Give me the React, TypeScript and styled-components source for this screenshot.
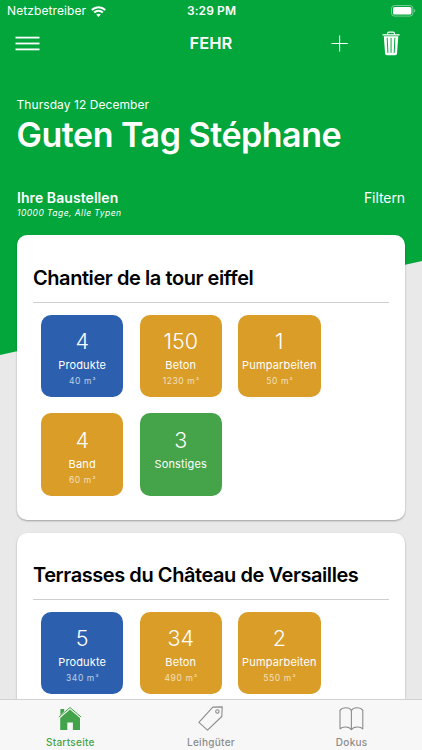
import React from "react";
import styled, { createGlobalStyle } from "styled-components";

const GlobalStyle = createGlobalStyle`
  * { box-sizing: border-box; }
  body {
    margin: 0;
    font-family: Inter, "Liberation Sans", sans-serif;
    -webkit-font-smoothing: antialiased;
  }
`;

const Screen = styled.div`
  position: relative;
  display: flex;
  flex-direction: column;
  width: 422px;
  height: 750px;
  overflow: hidden;
  color: #fff;
  background: #e9e9e9;
  white-space: nowrap;
  isolation: isolate;

  &::before {
    content: "";
    position: absolute;
    inset: 0;
    z-index: -1;
    background: #02a63b;
    clip-path: polygon(0 0, 100% 0, 100% 261px, 0 355px);
  }
`;

const StatusBar = styled.div`
  display: grid;
  grid-template-columns: 1fr auto 1fr;
  align-items: center;
  flex: none;
  height: 22px;
  padding: 0 6px 0 7px;
`;

const Carrier = styled.div`
  display: flex;
  align-items: center;
  gap: 5px;
  font-size: 12px;
  line-height: 22px;
  letter-spacing: 0.1px;
`;

const Clock = styled.div`
  font-size: 12px;
  line-height: 22px;
  font-weight: 600;
  letter-spacing: 0.1px;
`;

const Battery = styled.svg`
  justify-self: end;
  display: block;
`;

const NavBar = styled.nav`
  display: grid;
  grid-template-columns: 1fr auto 1fr;
  align-items: center;
  flex: none;
  height: 43px;
  padding: 0 15px;
`;

const NavTitle = styled.div`
  padding-bottom: 1px;
  font-size: 16.5px;
  line-height: 20px;
  font-weight: 600;
`;

const NavActions = styled.div`
  display: flex;
  align-items: center;
  justify-content: flex-end;
  gap: 33px;
  padding-right: 7px;
`;

const IconButton = styled.button`
  display: flex;
  justify-self: start;
  padding: 0;
  border: 0;
  background: none;
  color: inherit;
`;

const Greeting = styled.header`
  flex: none;
  padding: 31.5px 17px 0 16.5px;
`;

const DateLine = styled.div`
  font-size: 12px;
  line-height: 16px;
  letter-spacing: 0.07px;
`;

const Title = styled.h1`
  margin: 2.5px 0 0;
  font-size: 34px;
  line-height: 40px;
  font-weight: 600;
  letter-spacing: -0.47px;
`;

const SectionHead = styled.div`
  display: flex;
  justify-content: space-between;
  flex: none;
  height: 46.3px;
  margin-top: 34px;
  padding: 0 17px;
`;

const SectionTitle = styled.h2`
  margin: 0;
  font-size: 14px;
  line-height: 18px;
  font-weight: 600;
  letter-spacing: 0.07px;
`;

const SectionNote = styled.div`
  margin-top: 1px;
  font-size: 8.5px;
  line-height: 10px;
  font-style: italic;
  letter-spacing: 0.46px;
`;

const FilterLink = styled.div`
  font-size: 14px;
  line-height: 18px;
  letter-spacing: -0.08px;
`;

const Sites = styled.main`
  display: flex;
  flex-direction: column;
  gap: 12.5px;
  flex: 1;
  min-height: 0;
  overflow: hidden;
  padding: 0 17px;
`;

const Card = styled.section`
  flex: none;
  height: 284.8px;
  padding: 30.4px 16px 0;
  border-radius: 10px;
  background: #fff;
  box-shadow: 0 1px 2px rgba(0, 0, 0, 0.32);
`;

const CardTitle = styled.h3`
  margin: 0;
  height: 37px;
  font-size: 20px;
  line-height: 24px;
  font-weight: 600;
  letter-spacing: -0.43px;
  color: #000;
  border-bottom: 1px solid #cfcfcf;
`;

const Tiles = styled.div`
  display: grid;
  grid-template-columns: repeat(3, 82.4px);
  gap: 16.2px;
  padding: 12.1px 8px 0;
`;

type Tone = "blue" | "amber" | "green";
const tones: Record<Tone, string> = {
  blue: "#2c60ae",
  amber: "#da9d27",
  green: "#45a349",
};

const TileBox = styled.div<{ $tone: Tone }>`
  display: flex;
  flex-direction: column;
  align-items: center;
  height: 82.4px;
  padding-top: 14.2px;
  border-radius: 10px;
  background: ${({ $tone }) => tones[$tone]};
`;

const Count = styled.div`
  font-size: 21.5px;
  line-height: 24px;
  font-weight: 350;
`;

const Label = styled.div`
  margin-top: 5px;
  font-size: 11px;
  line-height: 14px;
  letter-spacing: 0.15px;
`;

const Volume = styled.div`
  margin-top: 3px;
  font-size: 8.5px;
  line-height: 12px;
  letter-spacing: 0.6px;
  opacity: 0.68;
`;

const Exponent = styled.span`
  display: inline-block;
  margin-left: 0.6px;
  font-size: 6.5px;
  line-height: 6px;
  letter-spacing: 0;
  vertical-align: 1px;
`;

const TabBar = styled.footer`
  display: grid;
  grid-template-columns: repeat(3, 1fr);
  flex: none;
  height: 51px;
  border-top: 1px solid #d2d2d2;
  background: #f7f7f7;
`;

const Tab = styled.div<{ $active?: boolean }>`
  display: flex;
  flex-direction: column;
  align-items: center;
  padding-top: 6px;
  color: ${({ $active }) => ($active ? "#43a34a" : "#8c8c8c")};
`;

const TabLabel = styled.div`
  margin-top: 4px;
  font-size: 10px;
  line-height: 14px;
  font-weight: 500;
  letter-spacing: 0.3px;
`;

const WifiIcon = () => (
  <svg width="15" height="11" viewBox="0 0 15 11" fill="none" stroke="#fff" strokeWidth="2.1">
    <path d="M0.8 4.1C4.6 0.3 10.4 0.3 14.2 4.1" />
    <path d="M3.2 6.6C5.7 4.2 9.3 4.2 11.8 6.6" />
    <path d="M7.5 10.9 5.2 8.6C6.5 7.4 8.5 7.4 9.8 8.6Z" fill="#fff" stroke="none" />
  </svg>
);

const BatteryIcon = () => (
  <Battery width="25" height="12" viewBox="0 0 25 12">
    <rect x="0.5" y="0.5" width="21.4" height="10.6" rx="3" fill="none" stroke="#fff" strokeOpacity="0.5" strokeWidth="0.9" />
    <rect x="2" y="2" width="18.4" height="7.6" rx="1.6" fill="#fff" />
    <path d="M23.1 4v3.6c1.5-.6 1.5-3 0-3.6Z" fill="#fff" fillOpacity="0.5" />
  </Battery>
);

const MenuIcon = () => (
  <svg width="25" height="16" viewBox="0 0 25 16" fill="#fff">
    <rect x="0.5" y="0.7" width="24" height="1.8" />
    <rect x="0.5" y="6.6" width="24" height="1.8" />
    <rect x="0.5" y="12.5" width="24" height="1.8" />
  </svg>
);

const PlusIcon = () => (
  <svg width="18" height="18" viewBox="0 0 18 18" stroke="#fff" strokeWidth="1.1">
    <path d="M8.6 0.4v16.2M0.5 8.5h16.3" />
  </svg>
);

const TrashIcon = () => (
  <svg width="18" height="25" viewBox="0 0 18 25">
    <path d="M5.7 3.5V2.4C5.7 1.6 6.1 1.1 6.9 1.1h4.3c.8 0 1.2.5 1.2 1.3v1.1" fill="none" stroke="#fff" strokeWidth="1.1" />
    <path d="M0.5 3.2h17.1v1.3H0.5Z" fill="#fff" />
    <path d="M1.8 5.3h14.5L15 22.6c-.1 1.1-.7 1.7-1.8 1.7H4.9c-1.1 0-1.7-.6-1.8-1.7Z" fill="#fff" />
    <path d="M5.2 7.2 5.9 21.4M9.05 7.2v14.2M12.9 7.2 12.2 21.4" fill="none" stroke="#02a63b" strokeWidth="1" strokeLinecap="round" />
  </svg>
);

const HomeIcon = () => (
  <svg width="24" height="25" viewBox="0 0 24 25" fill="currentColor">
    <path d="M2.4 2.9h3.8v2.7L2.4 8.9Z" />
    <path d="M0.9 11 12 1.5l11.1 9.5" fill="none" stroke="currentColor" strokeWidth="1" />
    <path d="M12 3.5 22 12.1v11.9h-7.1v-7.4H9.3v7.4H2.2V12.1Z" />
  </svg>
);

const TagIcon = () => (
  <svg width="25" height="25" viewBox="0 0 25 25" fill="none" stroke="currentColor" strokeWidth="1.1" strokeLinejoin="round">
    <path d="M0.9 16.4 14.8 1.1l9.4-.2-.4 9.6L9.5 24.2Z" />
    <circle cx="19.4" cy="5.5" r="1.7" />
  </svg>
);

const BookIcon = () => (
  <svg width="25" height="25" viewBox="0 0 25 25" fill="none" stroke="currentColor" strokeWidth="1.1" strokeLinejoin="round">
    <path d="M12.4 4.4C10.4.9 3.4.9 1 4.4v18.4c2.4-2.5 9.2-2.5 11.4.9 2.2-3.4 9-3.4 11.4-.9V4.4C21.4.9 14.4.9 12.4 4.4Z" />
    <path d="M12.4 4.4v19.3" />
  </svg>
);

interface Item {
  tone: Tone;
  count: number;
  label: string;
  volume?: number;
}

const sites: { name: string; items: Item[] }[] = [
  {
    name: "Chantier de la tour eiffel",
    items: [
      { tone: "blue", count: 4, label: "Produkte", volume: 40 },
      { tone: "amber", count: 150, label: "Beton", volume: 1230 },
      { tone: "amber", count: 1, label: "Pumparbeiten", volume: 50 },
      { tone: "amber", count: 4, label: "Band", volume: 60 },
      { tone: "green", count: 3, label: "Sonstiges" },
    ],
  },
  {
    name: "Terrasses du Château de Versailles",
    items: [
      { tone: "blue", count: 5, label: "Produkte", volume: 340 },
      { tone: "amber", count: 34, label: "Beton", volume: 490 },
      { tone: "amber", count: 2, label: "Pumparbeiten", volume: 550 },
    ],
  },
];

export default function App() {
  return (
    <Screen>
      <GlobalStyle />
      <StatusBar>
        <Carrier>
          Netzbetreiber
          <WifiIcon />
        </Carrier>
        <Clock>3:29 PM</Clock>
        <BatteryIcon />
      </StatusBar>
      <NavBar>
        <IconButton aria-label="Menü">
          <MenuIcon />
        </IconButton>
        <NavTitle>FEHR</NavTitle>
        <NavActions>
          <IconButton aria-label="Hinzufügen">
            <PlusIcon />
          </IconButton>
          <IconButton aria-label="Löschen">
            <TrashIcon />
          </IconButton>
        </NavActions>
      </NavBar>
      <Greeting>
        <DateLine>Thursday 12 December</DateLine>
        <Title>Guten Tag Stéphane</Title>
      </Greeting>
      <SectionHead>
        <div>
          <SectionTitle>Ihre Baustellen</SectionTitle>
          <SectionNote>10000 Tage, Alle Typen</SectionNote>
        </div>
        <FilterLink>Filtern</FilterLink>
      </SectionHead>
      <Sites>
        {sites.map((site) => (
          <Card key={site.name}>
            <CardTitle>{site.name}</CardTitle>
            <Tiles>
              {site.items.map((item) => (
                <TileBox key={item.label} $tone={item.tone}>
                  <Count>{item.count}</Count>
                  <Label>{item.label}</Label>
                  {item.volume !== undefined && (
                    <Volume>
                      {item.volume} m<Exponent>³</Exponent>
                    </Volume>
                  )}
                </TileBox>
              ))}
            </Tiles>
          </Card>
        ))}
      </Sites>
      <TabBar>
        <Tab $active>
          <HomeIcon />
          <TabLabel>Startseite</TabLabel>
        </Tab>
        <Tab>
          <TagIcon />
          <TabLabel>Leihgüter</TabLabel>
        </Tab>
        <Tab>
          <BookIcon />
          <TabLabel>Dokus</TabLabel>
        </Tab>
      </TabBar>
    </Screen>
  );
}
